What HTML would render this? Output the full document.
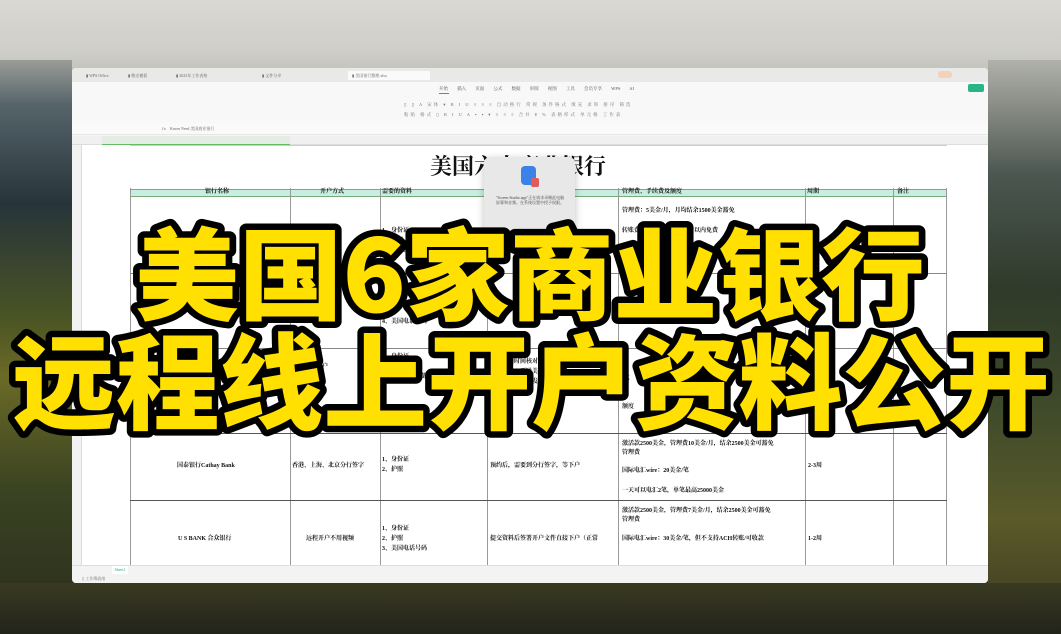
<!DOCTYPE html>
<html><head><meta charset="utf-8"><style>
*{margin:0;padding:0;box-sizing:border-box}
body{width:1061px;height:634px;overflow:hidden;position:relative;font-family:"Liberation Serif","Noto Serif CJK SC",serif;
background:linear-gradient(180deg,#d9d8d2 0%,#cfcfc8 8%,#b7b9b2 14%,#6f7a70 22%,#2f3d36 34%,#2c3a26 50%,#3b4420 68%,#4a4a22 80%,#27281a 100%);}
.bgl{position:absolute;left:0;top:60px;width:72px;height:574px;background:linear-gradient(180deg,#9a9c96 0%,#55636a 8%,#27343a 25%,#4a5424 45%,#6b6a26 55%,#3a4322 75%,#2a2c1c 100%)}
.bgr{position:absolute;left:988px;top:60px;width:73px;height:574px;background:linear-gradient(180deg,#b0b1ab 0%,#8a8d86 8%,#4b5650 20%,#2f3a2a 40%,#3e4a2a 60%,#5a5a2a 80%,#3a3820 100%)}
.bgb{position:absolute;left:0;top:583px;width:1061px;height:51px;background:linear-gradient(180deg,#3a3a22,#22241a)}
.win{position:absolute;left:72px;top:68px;width:916px;height:515px;background:#f6f6f5;border-radius:4px;overflow:hidden}
.tabs{position:absolute;left:0;top:0;width:916px;height:14px;background:#e9e9e8}
.tab{position:absolute;top:3px;height:9px;font-size:4px;color:#666;line-height:9px}
.tb{position:absolute;top:14px;left:0;width:916px;height:48px;background:#f8f8f8;border-bottom:1px solid #e3e3e3}
.fb{position:absolute;top:55px;left:0;width:916px;height:12px;background:#fafafa;border-bottom:1px solid #e6e6e6}
.colh{position:absolute;top:68px;left:0;width:916px;height:9px;background:#f0f0f0;border-bottom:1px solid #ddd}
.sheet{position:absolute;top:77px;left:0;width:916px;height:420px;background:#fff}
.rowh{position:absolute;top:77px;left:0;width:10px;height:420px;background:#f2f2f2;border-right:1px solid #ddd}
.t{position:absolute;left:58px;top:0;width:817px;height:420px}
.vl{position:absolute;top:43px;width:1px;height:377px;background:#999}
.hl{position:absolute;left:0;width:817px;height:1px;background:#888}
.hdr{position:absolute;left:0;top:44px;width:817px;height:8px;background:#c6efe2;border-top:1px solid #7a7;border-bottom:1px solid #7a7}
.c{position:absolute;font-size:6px;color:#111;line-height:9px;white-space:nowrap;font-weight:700}
.title{position:absolute;left:300px;top:5px;font-size:22px;color:#111;font-family:"Noto Serif CJK SC",serif;font-weight:700}
.pop{position:absolute;left:484px;top:157px;width:91px;height:80px;background:#e8e8e8;border-radius:6px;box-shadow:0 2px 8px rgba(0,0,0,.25)}
.st{position:absolute;top:497px;left:0;width:916px;height:18px;background:#f3f3f3;border-top:1px solid #ddd}
svg.big{position:absolute;left:0;top:0}
</style></head><body>
<div class="bgl"></div><div class="bgr"></div><div class="bgb"></div>
<div class="win">
 <div class="tabs">
  <div class="tab" style="left:14px">▮ WPS Office</div>
  <div class="tab" style="left:56px">▮ 稻壳模板</div>
  <div class="tab" style="left:104px">▮ 2023年工作表格</div>
  <div class="tab" style="left:190px">▮ 文件分享</div>
  <div class="tab" style="left:276px;background:#fafafa;width:82px;padding-left:4px">▮ 美国银行整理.xlsx</div>
  <div style="position:absolute;left:866px;top:3px;width:14px;height:7px;background:#f2d2b8;border-radius:3px"></div>
 </div>
 <div class="tb">
  <div style="position:absolute;left:367px;top:4px;font-size:4.5px;color:#555;word-spacing:8px">开始 插入 页面 公式 数据 审阅 视图 工具 会员专享 WPS AI</div>
  <div style="position:absolute;left:367px;top:11px;width:10px;height:1px;background:#2a8"></div>
  <div style="position:absolute;left:896px;top:2px;width:16px;height:8px;background:#2bb38a;border-radius:2px"></div>
  <div style="position:absolute;left:332px;top:20px;font-size:4.5px;color:#777;letter-spacing:2px">▯ ▯ A 宋体 ▾ B I U ≡ ≡ ≡ 自动换行 常规 条件格式 填充 求和 排序 筛选</div>
  <div style="position:absolute;left:332px;top:30px;font-size:4.5px;color:#777;letter-spacing:2px">粘贴 格式 ▯ B I U A ▪ ▪ ▾ ≡ ≡ ≡ 合并 ¥ % 表格样式 单元格 工作表</div>
 </div>
 <div class="fb"><div style="position:absolute;left:90px;top:3px;font-size:4px;color:#666">ƒx　Kesen Need 美国商业银行</div></div>
 <div class="colh"><div style="position:absolute;left:30px;top:0;width:188px;height:9px;background:#e4ede4;border-bottom:1px solid #6b6"></div></div>
 <div class="sheet">
  <div class="t">
   <div class="title">美国六大商业银行</div>
   <div class="hdr"></div>
   <div class="c" style="left:75px;top:43px">银行名称</div><div class="c" style="left:190px;top:43px">开户方式</div><div class="c" style="left:252px;top:43px">需要的资料</div><div class="c" style="left:492px;top:43px">管理费、手续费及额度</div><div class="c" style="left:677px;top:43px">周期</div><div class="c" style="left:767px;top:43px">备注</div>
   <div class="vl" style="left:0"></div><div class="vl" style="left:160px"></div><div class="vl" style="left:250px"></div><div class="vl" style="left:357px"></div><div class="vl" style="left:488px"></div><div class="vl" style="left:675px"></div><div class="vl" style="left:763px"></div><div class="vl" style="left:816px"></div>
   <div class="hl" style="top:0;background:#ccc"></div>
   <div class="hl" style="top:128px"></div><div class="hl" style="top:203px"></div><div class="hl" style="top:288px;background:#555"></div><div class="hl" style="top:355px;background:#555"></div>
   <div class="c" style="left:492px;top:62px">管理费：5美金/月，月均结余1500美金豁免</div>
   <div class="c" style="left:492px;top:82px">转账费：国内转账20万美金以内免费</div>
   <div class="c" style="left:252px;top:82px">1、身份证</div><div class="c" style="left:252px;top:92px">2、护照</div><div class="c" style="left:252px;top:102px">3、地址证明</div>
   <div class="c" style="left:252px;top:173px">4、美国电话号码</div>
   <div class="c" style="left:162px;top:218px">远程视频开户</div>
   <div class="c" style="left:252px;top:208px">1、身份证</div><div class="c" style="left:252px;top:218px">2、护照</div><div class="c" style="left:252px;top:228px">3、内地卡卡面截图</div>
   <div class="c" style="left:360px;top:213px">预约视频时间核对资料</div><div class="c" style="left:360px;top:223px">审核通过，开通美国账户</div><div class="c" style="left:360px;top:233px">审核通过后，会发账户邮件，激活账户</div>
   <div class="c" style="left:492px;top:230px">/笔</div><div class="c" style="left:492px;top:258px">额度</div>
   <div class="c" style="left:492px;top:295px">激活款2500美金，管理费10美金/月，结余2500美金可豁免</div>
   <div class="c" style="left:492px;top:304px">管理费</div>
   <div class="c" style="left:492px;top:322px">国际电汇wire：20美金/笔</div>
   <div class="c" style="left:492px;top:342px">一天可以电汇2笔，单笔最高25000美金</div>
   <div class="c" style="left:47px;top:317px">国泰银行Cathay Bank</div>
   <div class="c" style="left:162px;top:317px">香港、上海、北京分行签字</div>
   <div class="c" style="left:252px;top:311px">1、身份证</div><div class="c" style="left:252px;top:321px">2、护照</div>
   <div class="c" style="left:360px;top:317px">预约后，需要到分行签字，等下户</div>
   <div class="c" style="left:678px;top:317px">2-3周</div>
   <div class="c" style="left:492px;top:362px">激活款2500美金，管理费7美金/月，结余2500美金可豁免</div>
   <div class="c" style="left:492px;top:371px">管理费</div>
   <div class="c" style="left:492px;top:390px">国际电汇wire：30美金/笔，但不支持ACH转账/可收款</div>
   <div class="c" style="left:48px;top:390px">U S BANK 合众银行</div>
   <div class="c" style="left:176px;top:390px">远程开户不用视频</div>
   <div class="c" style="left:252px;top:380px">1、身份证</div><div class="c" style="left:252px;top:390px">2、护照</div><div class="c" style="left:252px;top:400px">3、美国电话号码</div>
   <div class="c" style="left:360px;top:390px">提交资料后签署开户文件直接下户（正常</div>
   <div class="c" style="left:678px;top:390px">1-2周</div>
  </div>
 </div>
 <div class="rowh"></div>
 <div class="st">
  <div style="position:absolute;left:40px;top:0;width:16px;height:8px;background:#fff;font-size:4px;color:#2a8;text-align:center;line-height:8px">Sheet1</div>
  <div style="position:absolute;left:10px;top:10px;font-size:4px;color:#777">▯ 工作簿就绪</div>
 </div>
</div>
<div class="pop">
 <div style="position:absolute;left:37px;top:9px;width:15px;height:19px;background:#3b82e8;border-radius:4px"></div>
 <div style="position:absolute;left:47px;top:21px;width:8px;height:9px;background:#e25a5a;border-radius:2px"></div>
 <div style="position:absolute;left:10px;top:38px;width:72px;font-size:4px;line-height:5px;color:#444;text-align:center">"Screen Studio.app"正在请求录制此电脑屏幕和音频。在系统设置中授予权限。</div>
</div>
<svg class="big" width="1061" height="634" viewBox="0 0 1061 634">
 <g font-family="Noto Sans CJK SC, sans-serif" font-weight="900" fill="#ffe000" stroke="#000" stroke-width="13" stroke-linejoin="round" paint-order="stroke" style="paint-order:stroke">
  <text x="135" y="312" font-size="100" textLength="790" lengthAdjust="spacingAndGlyphs">美国6家商业银行</text>
  <text x="12" y="421" font-size="104" textLength="1038" lengthAdjust="spacingAndGlyphs">远程线上开户资料公开</text>
 </g>
</svg>
</body></html>
